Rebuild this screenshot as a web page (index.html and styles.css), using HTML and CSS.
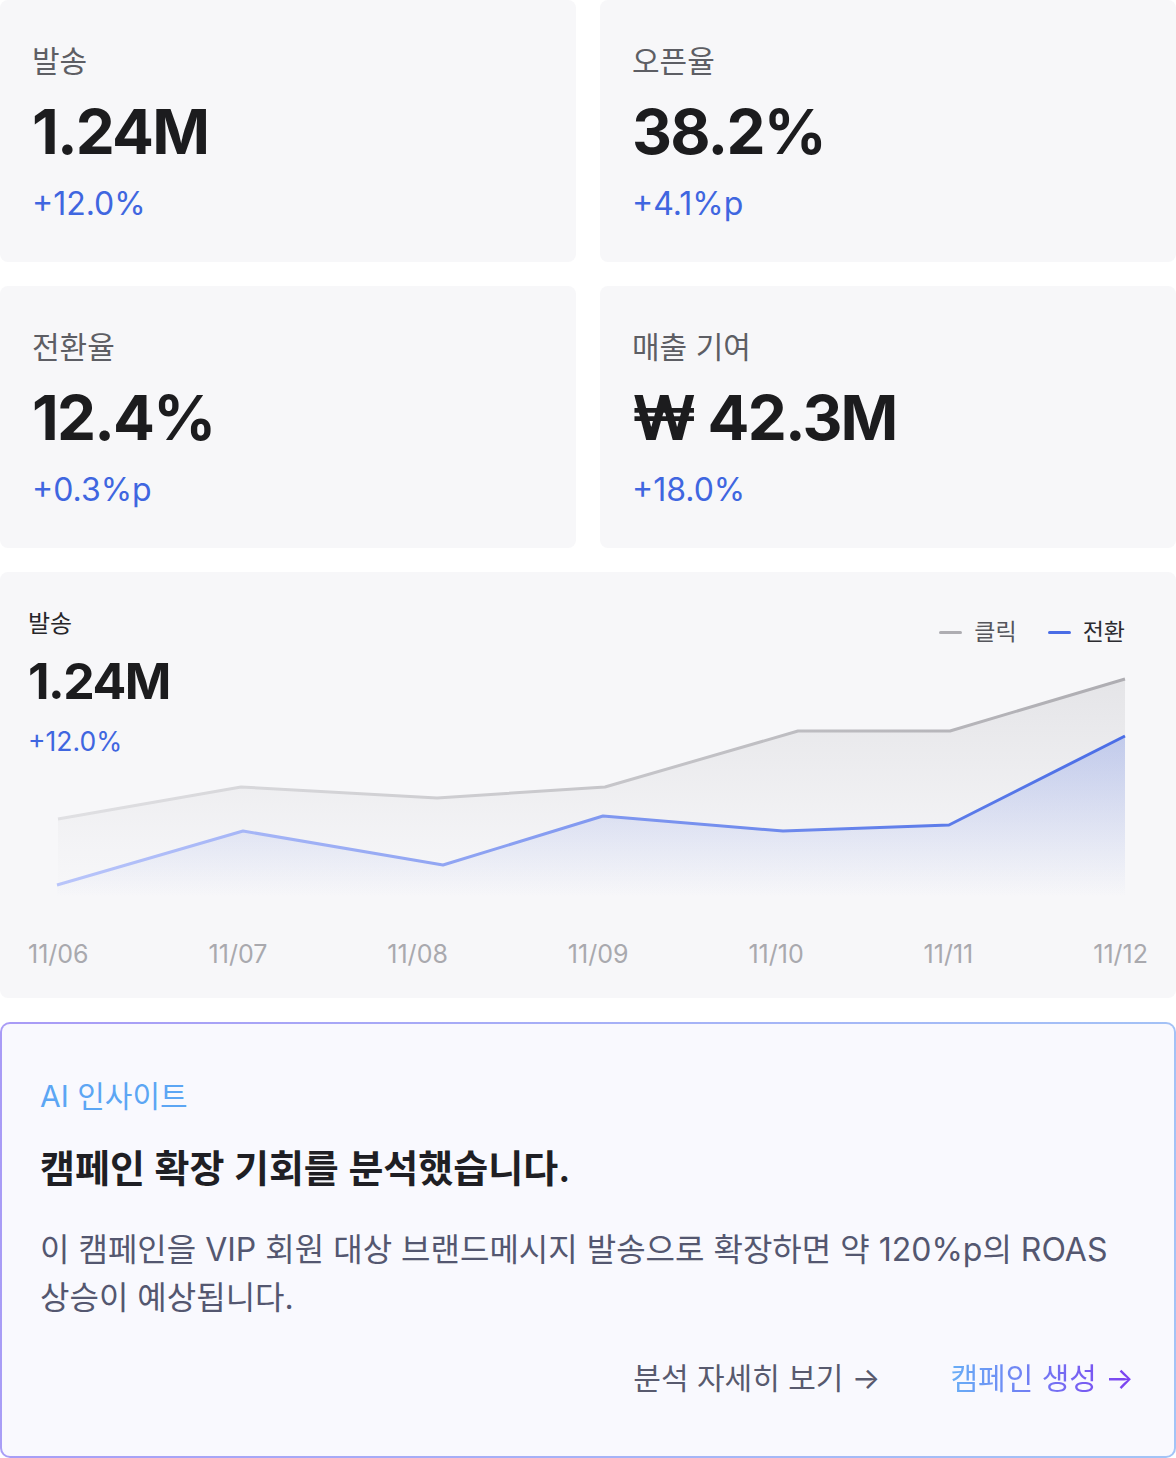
FILE: index.html
```html
<!DOCTYPE html>
<html lang="ko">
<head>
<meta charset="utf-8">
<title>캠페인 대시보드</title>
<link rel="stylesheet" href="styles.css">
</head>
<body>
<main class="page">
  <section class="stat-grid">
    <div class="stat-card">
      <div class="stat-label">발송</div>
      <div class="stat-value">1.24M</div>
      <div class="stat-delta">+12.0%</div>
    </div>
    <div class="stat-card">
      <div class="stat-label">오픈율</div>
      <div class="stat-value">38.2%</div>
      <div class="stat-delta">+4.1%p</div>
    </div>
    <div class="stat-card">
      <div class="stat-label">전환율</div>
      <div class="stat-value">12.4%</div>
      <div class="stat-delta">+0.3%p</div>
    </div>
    <div class="stat-card">
      <div class="stat-label">매출 기여</div>
      <div class="stat-value">₩ 42.3M</div>
      <div class="stat-delta">+18.0%</div>
    </div>
  </section>

  <section class="chart-card">
    <div class="chart-stage">
      <div class="chart-head">
        <div class="chart-summary">
          <div class="chart-label">발송</div>
          <div class="chart-value">1.24M</div>
          <div class="chart-delta">+12.0%</div>
        </div>
        <ul class="legend">
          <li class="legend-item"><span class="legend-swatch swatch-click"></span><span class="legend-text">클릭</span></li>
          <li class="legend-item"><span class="legend-swatch swatch-conv"></span><span class="legend-text legend-strong">전환</span></li>
        </ul>
      </div>
      <svg class="chart-svg" viewBox="0 0 1120 290" width="1120" height="290" aria-hidden="true">
        <defs>
          <linearGradient id="greyFill" x1="0" y1="0" x2="0" y2="1">
            <stop offset="0" stop-color="#c9c9ce" stop-opacity="0.4"/>
            <stop offset="0.75" stop-color="#c9c9ce" stop-opacity="0.08"/>
            <stop offset="1" stop-color="#c9c9ce" stop-opacity="0"/>
          </linearGradient>
          <linearGradient id="blueFill" x1="0" y1="0" x2="0" y2="1">
            <stop offset="0" stop-color="#5a7ae8" stop-opacity="0.28"/>
            <stop offset="1" stop-color="#5a7ae8" stop-opacity="0"/>
          </linearGradient>
          <linearGradient id="greyLine" x1="0" y1="0" x2="1" y2="0">
            <stop offset="0" stop-color="#e0e0e3"/>
            <stop offset="1" stop-color="#aeadb2"/>
          </linearGradient>
          <linearGradient id="blueLine" x1="0" y1="0" x2="1" y2="0">
            <stop offset="0" stop-color="#b9c5fa"/>
            <stop offset="1" stop-color="#4a6de6"/>
          </linearGradient>
        </defs>
        <polygon fill="url(#greyFill)" points="30,212 213,180 409,191 577,180 770,124 922,124 1097,72 1097,290 30,290"/>
        <polygon fill="url(#blueFill)" points="29,278 215,224 415,258 575,209 755,224 921,218 1097,129 1097,290 29,290"/>
        <polyline fill="none" stroke="url(#greyLine)" stroke-width="3" stroke-linejoin="round" points="30,212 213,180 409,191 577,180 770,124 922,124 1097,72"/>
        <polyline fill="none" stroke="url(#blueLine)" stroke-width="3" stroke-linejoin="round" points="29,278 215,224 415,258 575,209 755,224 921,218 1097,129"/>
      </svg>
    </div>
    <div class="x-axis">
      <span>11/06</span><span>11/07</span><span>11/08</span><span>11/09</span><span>11/10</span><span>11/11</span><span>11/12</span>
    </div>
  </section>

  <section class="insight-card">
    <div class="insight-tag">AI 인사이트</div>
    <h2 class="insight-title">캠페인 확장 기회를 분석했습니다.</h2>
    <p class="insight-body">이 캠페인을 VIP 회원 대상 브랜드메시지 발송으로 확장하면 약 120%p의 ROAS 상승이 예상됩니다.</p>
    <div class="insight-actions">
      <a class="action-link" href="#">분석 자세히 보기 →</a>
      <a class="action-link action-primary" href="#">캠페인 생성 →</a>
    </div>
  </section>
</main>
</body>
</html>
```

FILE: styles.css
```css
* { box-sizing: border-box; }

html, body {
  margin: 0;
  padding: 0;
  background: #ffffff;
}

body {
  font-family: "Inter", "Noto Sans CJK KR", sans-serif;
  color: #1c1c1f;
}

.page {
  width: 1176px;
  display: flex;
  flex-direction: column;
  gap: 24px;
}

/* ---------- stat cards ---------- */
.stat-grid {
  display: grid;
  grid-template-columns: 1fr 1fr;
  gap: 24px;
}

.stat-card {
  background: #f7f7f9;
  border-radius: 8px;
  padding: 41px 32px 38px;
}

.stat-label {
  font-size: 30px;
  line-height: 40px;
  color: #5d5e64;
}

.stat-value {
  margin-top: 15px;
  font-size: 62px;
  line-height: 72px;
  font-weight: 700;
  color: #1c1c1e;
  letter-spacing: -1.8px;
}

.stat-delta {
  margin-top: 16px;
  font-size: 32px;
  line-height: 40px;
  color: #3f66e0;
}

/* ---------- chart card ---------- */
.chart-card {
  background: #f7f7f9;
  border-radius: 8px;
  padding: 35px 28px 28px;
}

.chart-stage {
  display: grid;
}

.chart-head,
.chart-svg {
  grid-area: 1 / 1;
}

.chart-head {
  display: flex;
  justify-content: space-between;
  align-items: flex-start;
  position: relative;
  z-index: 1;
}

.chart-label {
  font-size: 24px;
  line-height: 34px;
  color: #26262a;
}

.chart-value {
  margin-top: 10px;
  font-size: 50px;
  line-height: 60px;
  font-weight: 700;
  color: #1c1c1e;
  letter-spacing: -1.5px;
}

.chart-delta {
  margin-top: 12px;
  font-size: 26.5px;
  line-height: 36px;
  color: #3f66e0;
}

.legend {
  list-style: none;
  margin: 9px 23px 0 0;
  padding: 0;
  display: flex;
  gap: 31px;
}

.legend-item {
  display: flex;
  align-items: center;
  gap: 12px;
  font-size: 23px;
  line-height: 32px;
}

.legend-swatch {
  width: 23px;
  height: 3px;
  border-radius: 2px;
}

.swatch-click { background: #aeadb2; }
.swatch-conv { background: #4a6de6; }

.legend-text { color: #55565c; }
.legend-strong { color: #2b2b30; }

.chart-svg {
  display: block;
  width: 1120px;
  height: 290px;
}

.x-axis {
  margin-top: 41px;
  display: flex;
  justify-content: space-between;
  font-size: 25px;
  line-height: 32px;
  color: #a9a9ae;
}

/* ---------- insight card ---------- */
.insight-card {
  border: 2px solid transparent;
  border-radius: 10px;
  background:
    linear-gradient(#f9f9fe, #f9f9fe) padding-box,
    linear-gradient(100deg, #a99bf6 0%, #a6b3f7 55%, #a3c4f6 100%) border-box;
  padding: 52px 40px 58px 38px;
}

.insight-tag {
  font-size: 30px;
  line-height: 40px;
  color: #5ca6f4;
}

.insight-title {
  margin: 26px 0 0;
  font-size: 38px;
  line-height: 52px;
  font-weight: 600;
  color: #1f1f24;
}

.insight-body {
  margin: 32px 0 0;
  font-size: 32px;
  line-height: 48px;
  color: #545770;
}

.insight-actions {
  margin-top: 36px;
  display: flex;
  justify-content: flex-end;
  gap: 70px;
}

.action-link {
  font-size: 30px;
  line-height: 40px;
  color: #585a6e;
  text-decoration: none;
}

.action-primary {
  background: linear-gradient(90deg, #68aef6 0%, #7d3ff0 100%);
  -webkit-background-clip: text;
  background-clip: text;
  color: transparent;
}
```
